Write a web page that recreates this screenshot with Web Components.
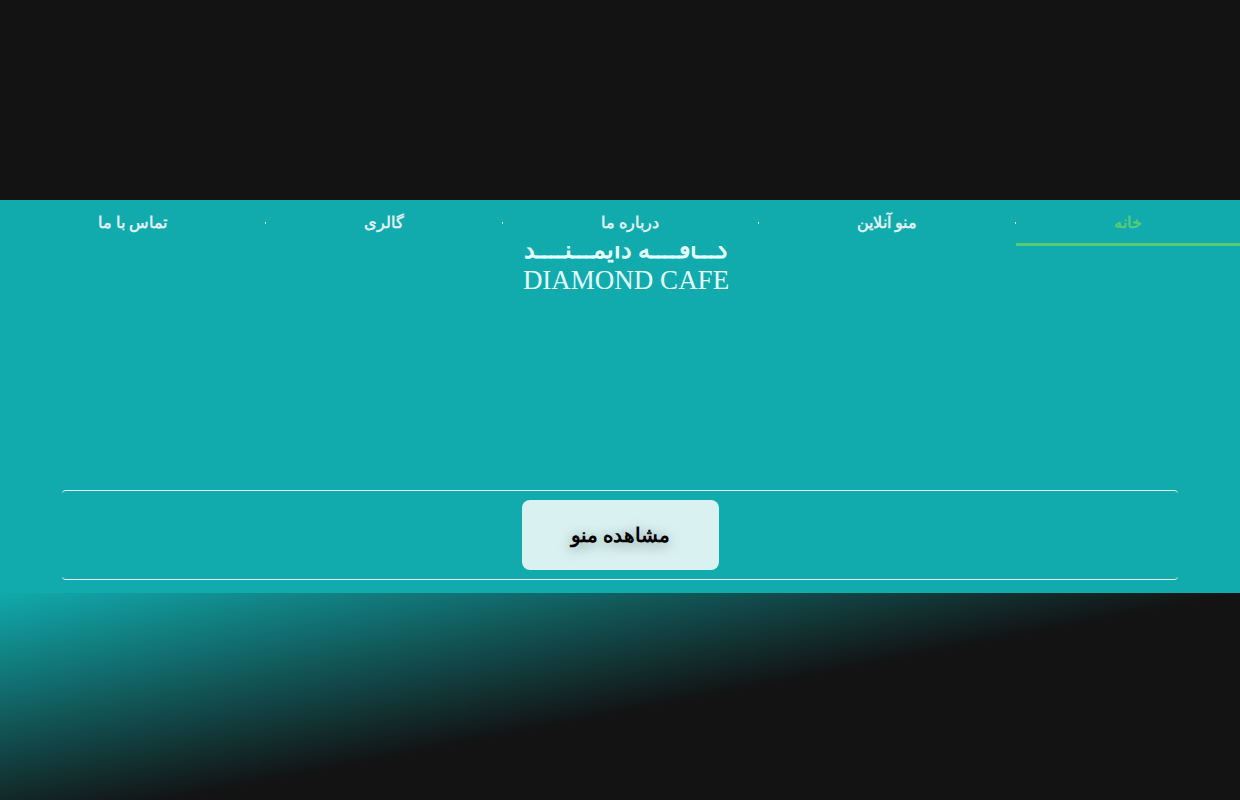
<!DOCTYPE html>
<html lang="fa" dir="rtl">
<head>
<meta charset="utf-8">
<meta name="viewport" content="width=device-width, initial-scale=1">
<title>کافه دایمند</title>
<style>
body{margin:0;min-height:100vh;font-family:"Liberation Serif",serif;background:#131313}
</style>
</head>
<body>
<cafe-page></cafe-page>
<script>
const define = (name, html) => {
  const t = document.createElement('template');
  t.innerHTML = html;
  customElements.define(name, class extends HTMLElement {
    constructor() {
      super();
      this.attachShadow({mode: 'open'}).append(t.content.cloneNode(true));
    }
  });
};

define('nav-item', `
<style>
:host{flex:1 1 auto;display:flex;align-items:center;height:43px;border-bottom:3px solid transparent;color:#dff0f3}
:host([current]){border-color:#57cc76;color:#57cc76}
.label{flex:1;text-align:center;font-size:16px;line-height:24px;font-weight:700;padding-top:2px}
</style>
<span class="label"><slot></slot></span>`);

define('cafe-nav', `
<style>
:host{display:block;position:relative;z-index:1;background:#11aaad}
nav{display:flex}
a{display:contents;text-decoration:none}
.dot{flex:none;align-self:center;width:1px;height:2px;background:#dff7f7}
</style>
<nav>
<a href="#home"><nav-item current>خانه</nav-item></a><span class="dot"></span>
<a href="#menu"><nav-item>منو آنلاین</nav-item></a><span class="dot"></span>
<a href="#about"><nav-item>درباره ما</nav-item></a><span class="dot"></span>
<a href="#gallery"><nav-item>گالری</nav-item></a><span class="dot"></span>
<a href="#contact"><nav-item>تماس با ما</nav-item></a>
</nav>`);

define('cafe-logo', `
<style>
:host{display:flex;flex-direction:column;align-items:center;margin-top:-12px;padding-left:12px;color:#e4ffff}
.fa{font-size:24px;line-height:32px;font-weight:700;white-space:nowrap}
.en{font-size:27px;line-height:28px;white-space:nowrap}
</style>
<span class="fa">کـــافــــه دایمـــنــــد</span>
<span class="en" dir="ltr">DIAMOND CAFE</span>`);

define('menu-button', `
<style>
:host{display:block}
button{display:block;border:0;border-radius:8px;padding:20px 49px;background:#d9f1f1;color:#000;font:700 20px/30px "Liberation Serif",serif;text-shadow:0 2px 14px rgba(0,0,0,.4);cursor:pointer}
</style>
<button type="button"><slot></slot></button>`);

define('hero-action', `
<style>
:host{display:flex;justify-content:center;width:90%;box-sizing:border-box;padding:9px 0;border-top:1px solid #e4ffff;border-bottom:1px solid #e4ffff;border-radius:4px}
</style>
<slot></slot>`);

define('cafe-page', `
<style>
:host{display:flex;flex-direction:column;min-height:100vh}
header{height:200px}
.hero{background:#11aaad;display:flex;flex-direction:column;align-items:center;padding-bottom:13px}
cafe-nav{align-self:stretch}
hero-action{margin-top:196px}
.fade{flex:1;background:linear-gradient(to bottom right,#11aaad,#131313 50%) 0 0/100% 240px no-repeat}
</style>
<header></header>
<main class="hero">
<cafe-nav></cafe-nav>
<cafe-logo></cafe-logo>
<hero-action><menu-button>مشاهده منو</menu-button></hero-action>
</main>
<div class="fade"></div>`);
</script>
</body>
</html>
